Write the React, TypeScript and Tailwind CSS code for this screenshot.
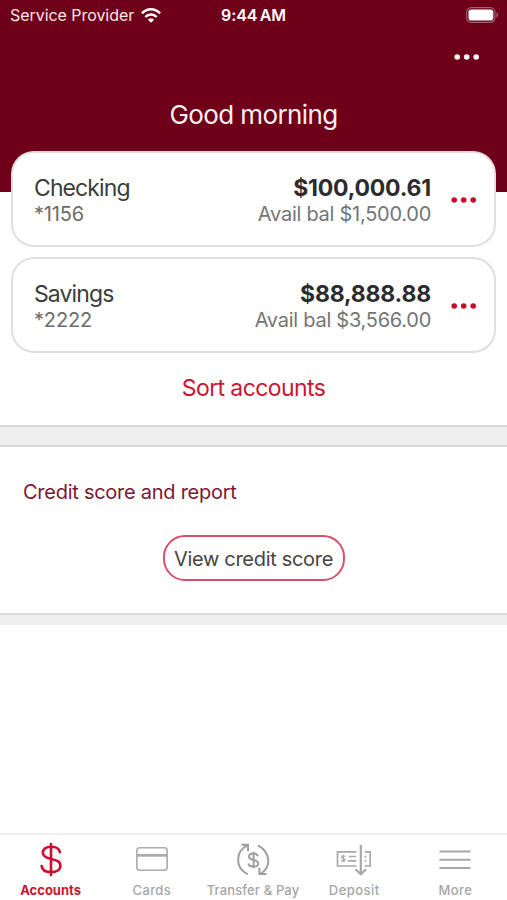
import React from "react";

function Dots({ color }: { color: string }) {
  return (
    <svg width="26" height="8" viewBox="0 0 26 8" fill={color}>
      <circle cx="3.2" cy="4" r="2.8" />
      <circle cx="12.7" cy="4" r="2.8" />
      <circle cx="22.2" cy="4" r="2.8" />
    </svg>
  );
}

function StatusBar() {
  return (
    <div className="grid h-[30px] grid-cols-[221px_1fr_auto] items-center pr-2 pl-2.5 text-[16px] leading-[30px] text-[#f6e7ea]">
      <div className="flex items-center gap-[7px]">
        <span className="tracking-[-0.05px] whitespace-nowrap">Service Provider</span>
        <svg width="20" height="15" viewBox="0 0 20 15" fill="none" stroke="#fff" strokeWidth="2.5">
          <path d="M1 5.4C6-.1 14-.1 19 5.4" />
          <path d="M4.3 9C7.5 5.5 12.5 5.5 15.7 9" />
          <path d="M10 14.8 6.9 11.7c1.6-1.7 4.6-1.7 6.2 0Z" fill="#fff" stroke="none" />
        </svg>
      </div>
      <span className="-ml-2.5 font-semibold tracking-[-0.1px] whitespace-nowrap text-white">9:44&#8202;&#8202;AM</span>
      <svg width="33" height="16" viewBox="0 0 33 16">
        <rect x=".7" y=".7" width="28.2" height="14.6" rx="4.6" fill="none" stroke="#a06070" strokeWidth="1.2" />
        <rect x="2.5" y="2.5" width="24.8" height="11" rx="2.8" fill="#fff" />
        <path d="M30.5 5.3c2.2 1 2.2 4.4 0 5.4Z" fill="#a06070" />
      </svg>
    </div>
  );
}

interface Account {
  name: string;
  mask: string;
  balance: string;
  available: string;
}

const accounts: Account[] = [
  { name: "Checking", mask: "*1156", balance: "$100,000.61", available: "Avail bal $1,500.00" },
  { name: "Savings", mask: "*2222", balance: "$88,888.88", available: "Avail bal $3,566.00" },
];

function AccountCard({ account }: { account: Account }) {
  return (
    <div className="flex h-24 items-center rounded-[23px] border-2 border-[#dfdfdf] bg-white pt-0.5 pr-[17px] pl-[21px]">
      <div className="flex-1">
        <div className="text-[23px] leading-[28px] tracking-[-0.9px] text-[#3c3c3c]">{account.name}</div>
        <div className="text-[20px] leading-[25px] tracking-[-0.15px] text-[#6c6c6c]">{account.mask}</div>
      </div>
      <div className="mr-5 text-right">
        <div className="text-[23px] leading-[28px] font-bold tracking-[-0.2px] text-[#2c2c2c]">{account.balance}</div>
        <div className="text-[20px] leading-[25px] tracking-[-0.26px] text-[#757575]">{account.available}</div>
      </div>
      <Dots color="#cb0b28" />
    </div>
  );
}

function DollarIcon() {
  return (
    <svg width="36" height="36" viewBox="0 0 36 36" fill="none" stroke="#cb0f2e" strokeWidth="2.6" strokeLinecap="round">
      <path d="M18 3v31M26.9 11.3c-.6-3.5-3.8-5.5-8.8-5.5-4.9 0-8.3 2.1-8.3 6 0 4 3.9 5.3 8.4 6.3 5 1.2 9.2 2.3 9.2 6.6 0 4.1-3.8 6.4-9.3 6.4-5.6 0-9-2.3-9.5-6.1" />
    </svg>
  );
}

function CardIcon() {
  return (
    <svg width="36" height="36" viewBox="0 0 36 36" fill="none" stroke="#ababab" strokeWidth="1.6">
      <rect x="2.9" y="6.8" width="30.2" height="22.4" rx="2.6" />
      <path d="M2.9 14.3h30.2" strokeWidth="2.8" />
    </svg>
  );
}

function TransferIcon() {
  return (
    <svg width="36" height="36" viewBox="0 0 36 36" fill="none" stroke="#9f9f9f" strokeWidth="2">
      <g transform="translate(.8 .8)">
        <path d="M12 32.6C-1.2 25.8-.6 9.8 11.8 3.3M5.6 3h6.6v6.4M22.2 3.5c13.2 7.4 13.6 22.4 1.6 29M23.6 26v6.3h7" />
        <path d="M17.8 10v16.4M22 14.4c-.5-1.8-2-2.6-4.4-2.6-2.7 0-4.4 1.1-4.4 3 0 2.2 2 2.8 4.4 3.3 2.6.6 4.8 1.3 4.8 3.5 0 2-2 3.2-4.8 3.2-2.8 0-4.7-1.1-5-3.1" />
      </g>
    </svg>
  );
}

function DepositIcon() {
  return (
    <svg width="36" height="36" viewBox="0 0 36 36" fill="none" stroke="#a8a8a8" strokeWidth="1.7">
      <g transform="translate(0 .8)">
        <path d="M20.5 10H1.5v14.2h19M28.8 10h5.4v14.2h-5.4M13 14.7h7.2M12 19h8.2M29.5 14v1.8M29.5 18.2V20" />
        <path d="M9 14.8c-.8-1.3-3.6-1.1-3.5.5.1 1.7 3.5.8 3.6 2.6.1 1.7-3 1.8-3.8.4M7.3 12.9v7.4" strokeWidth="1.2" />
        <path d="M24.8 3v29.5M19.5 27.5l5.3 5 5.3-5" strokeWidth="2.2" />
      </g>
    </svg>
  );
}

function MenuIcon() {
  return (
    <svg width="36" height="36" viewBox="0 0 36 36" stroke="#a8a8a8" strokeWidth="2">
      <path d="M2.5 10.4h31M2.5 18.7h31M2.5 27h31" />
    </svg>
  );
}

const tabs = [
  { label: "Accounts", icon: <DollarIcon />, style: "font-bold text-[#cb1533]" },
  { label: "Cards", icon: <CardIcon />, style: "font-medium tracking-[0.35px] text-[#a6a6a6]" },
  { label: "Transfer & Pay", icon: <TransferIcon />, style: "font-medium tracking-[0.15px] text-[#a6a6a6]" },
  { label: "Deposit", icon: <DepositIcon />, style: "font-medium tracking-[0.45px] text-[#a6a6a6]" },
  { label: "More", icon: <MenuIcon />, style: "font-medium tracking-[0.35px] text-[#a6a6a6]" },
];

export default function App() {
  return (
    <div className="flex h-[900px] w-[507px] flex-col overflow-hidden bg-white font-['Inter',sans-serif]">
      <header className="h-48 shrink-0 bg-[#6e0019]">
        <StatusBar />
        <div className="flex h-[54px] items-center justify-end pr-[27px]">
          <Dots color="#fff5f6" />
        </div>
        <h1 className="pt-[15px] text-center text-[26px] leading-8 tracking-[-0.6px] text-[#fbeff1]">Good morning</h1>
      </header>
      <main className="-mt-[41px] flex flex-1 flex-col">
        <div className="flex flex-col gap-2.5 px-[11px]">
          {accounts.map((a) => (
            <AccountCard key={a.name} account={a} />
          ))}
        </div>
        <button className="mt-[21px] text-center text-[23px] leading-[28px] tracking-[-0.6px] text-[#cb1533]">Sort accounts</button>
        <div className="mt-[23px] h-[22px] border-y-2 border-[#dadada] bg-[#eee]" />
        <section className="flex h-[166px] flex-col items-center pt-[33px]">
          <h2 className="w-full pl-[23px] text-[20px] leading-[25px] tracking-[-0.26px] text-[#7a1733]">Credit score and report</h2>
          <button className="mt-[30px] h-[46px] w-[182px] rounded-[22px] border-2 border-[#da5068] pt-0.5 text-[20px] tracking-[-0.31px] whitespace-nowrap text-[#444]">
            View credit score
          </button>
        </section>
        <div className="h-3 border-t-2 border-[#dadada] bg-[#eee]" />
      </main>
      <nav className="grid h-[67px] shrink-0 grid-cols-5 border-t-2 border-[#f0f0f0] pr-px">
        {tabs.map((t) => (
          <div key={t.label} className="flex flex-col items-center pt-1.5">
            {t.icon}
            <span className={"mt-1 text-[13px] leading-[18px] whitespace-nowrap " + t.style}>{t.label}</span>
          </div>
        ))}
      </nav>
    </div>
  );
}
